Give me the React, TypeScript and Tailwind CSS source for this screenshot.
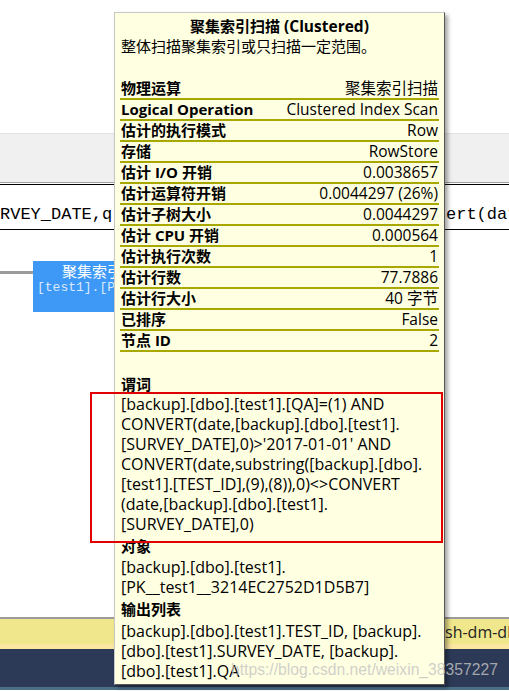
const rows: [string, string][] = [
  ["物理运算", "聚集索引扫描"],
  ["Logical Operation", "Clustered Index Scan"],
  ["估计的执行模式", "Row"],
  ["存储", "RowStore"],
  ["估计 I/O 开销", "0.0038657"],
  ["估计运算符开销", "0.0044297 (26%)"],
  ["估计子树大小", "0.0044297"],
  ["估计 CPU 开销", "0.000564"],
  ["估计执行次数", "1"],
  ["估计行数", "77.7886"],
  ["估计行大小", "40 字节"],
  ["已排序", "False"],
  ["节点 ID", "2"],
]

const predicate = [
  "[backup].[dbo].[test1].[QA]=(1) AND",
  "CONVERT(date,[backup].[dbo].[test1].",
  "[SURVEY_DATE],0)>'2017-01-01' AND",
  "CONVERT(date,substring([backup].[dbo].",
  "[test1].[TEST_ID],(9),(8)),0)<>CONVERT",
  "(date,[backup].[dbo].[test1].",
  "[SURVEY_DATE],0)",
]

const output = [
  "[backup].[dbo].[test1].TEST_ID, [backup].",
  "[dbo].[test1].SURVEY_DATE, [backup].",
  "[dbo].[test1].QA",
]

const sans = "font-['Open_Sans','Noto_Sans_CJK_SC',sans-serif]"
const mono = "font-['Liberation_Mono','Noto_Sans_CJK_SC',monospace]"

function Tooltip() {
  return (
    <div
      className={`absolute left-[114px] top-[12px] w-[331px] h-[673px] bg-[#ffffe1] border border-[#c8c8c8] border-r-[#555] border-b-[#555] shadow-[3px_3px_4px_rgba(0,0,0,0.35)] px-[5px] text-[15px] text-black ${sans}`}
    >
      <div className="text-center font-bold leading-[20px] mt-[3px]">
        聚集索引扫描 <span className="text-[15.5px]">(Clustered)</span>
      </div>
      <div className="leading-[20px] pl-[1px]">整体扫描聚集索引或只扫描一定范围。</div>

      <div className="mt-[23px]">
        {rows.map(([k, v]) => (
          <div
            key={k}
            className="flex justify-between items-center h-[21px] border-b-2 border-[#a8a800] px-[1px] whitespace-nowrap"
          >
            <span className="font-bold">{k}</span>
            <span className="text-[15.5px]">{v}</span>
          </div>
        ))}
      </div>

      <div className="mt-[22px] font-bold leading-[20px] pl-[1px]">谓词</div>
      <div className="leading-[20px] pl-[1px] text-[16px]">
        {predicate.map((l) => (
          <div key={l} className="whitespace-nowrap">{l}</div>
        ))}
      </div>

      <div className="mt-[2px] font-bold leading-[20px] pl-[1px]">对象</div>
      <div className="mt-[1px] leading-[20px] pl-[1px] text-[16px]">
        <div>[backup].[dbo].[test1].</div>
        <div>[PK__test1__3214EC2752D1D5B7]</div>
      </div>

      <div className="mt-[2px] font-bold leading-[20px] pl-[1px]">输出列表</div>
      <div className="mt-[2px] leading-[20px] pl-[1px] text-[16px]">
        {output.map((l) => (
          <div key={l} className="whitespace-nowrap">{l}</div>
        ))}
      </div>
    </div>
  )
}

export default function App() {
  return (
    <div className="relative w-[509px] h-[691px] overflow-hidden bg-white">
      <div className="h-[133px] bg-white" />
      <div className="h-[49px] bg-[#f0f0f0] border-t border-[#e2e2e2]" />
      <div className="h-[1px] bg-[#a0a0a0]" />
      <div className="h-[1px] bg-white" />
      <div className="h-[1px] bg-black" />

      <div className={`h-[44px] flex items-end pb-[4px] text-[17px] leading-[20px] text-black whitespace-nowrap ${mono}`}>
        <span className="w-[446px] shrink-0">RVEY_DATE,q</span>
        <span>ert(dat</span>
      </div>
      <div className="h-[1px] bg-black" />

      <div className="h-[31px]" />
      <div className="flex items-start">
        <div className="w-[33px] h-[3px] bg-[#9a9a9a] mt-[10px]" />
        <div className="w-[100px] h-[51px] bg-[#3d99f5] text-white pt-[1px] overflow-hidden whitespace-nowrap">
          <div className={`pl-[29px] text-[15px] leading-[18px] ${sans}`}>聚集索引扫描</div>
          <div className={`pl-[4px] text-[13px] leading-[16px] text-[#dbe9ff] ${mono}`}>[test1].[PK__test1]</div>
        </div>
      </div>

      <div className="h-[305px]" />
      <div className="h-[2px] bg-[#9c9c9c]" />
      <div className={`h-[25px] bg-[#f0e68c] flex items-center text-[16px] text-[#222] ${sans}`}>
        <span className="ml-[445px] whitespace-nowrap">sh-dm-db</span>
      </div>
      <div className="h-[5px] bg-[#fbe6a2]" />
      <div className="h-[38px] bg-[#2c3a57]" />
      <div className="h-[3px] bg-[#4d7086]" />

      <Tooltip />

      <div className="absolute left-[90px] top-[392px] w-[353px] h-[151px] border-2 border-[#e00000]" />

      <div className="absolute left-[231px] top-[659px] text-[15.7px] leading-[22px] text-[#c4c4c4]/80 font-['Liberation_Sans',sans-serif] whitespace-nowrap">
        https://blog.csdn.net/weixin_38357227
      </div>
    </div>
  )
}
